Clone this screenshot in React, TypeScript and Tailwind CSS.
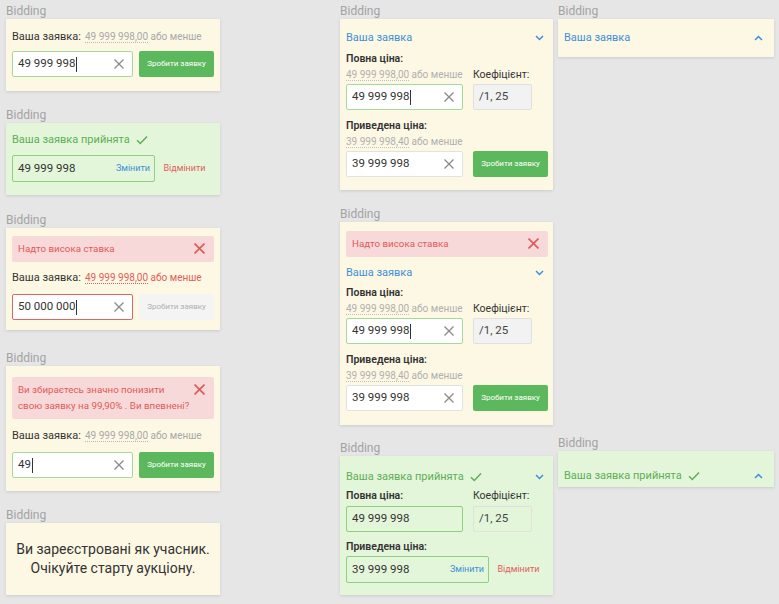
import React from 'react';

const cream = 'bg-[#fdf8e4]';
const green = 'bg-[#e3f6da]';

function Label() {
  return (
    <div className="h-[19px] pt-[3px] text-[12px] leading-[16px] text-[#a3a3a3]">Bidding</div>
  );
}

function Panel({ className, children }: { className: string; children?: React.ReactNode }) {
  return <div className={`shadow-[0_1px_3px_rgba(0,0,0,0.12)] ${className}`}>{children}</div>;
}

function XIcon({ size = 10, color = '#8a8a8a', stroke = 1.3 }: { size?: number; color?: string; stroke?: number }) {
  return (
    <svg width={size} height={size} viewBox="0 0 10 10" fill="none">
      <path d="M0.5 0.5 L9.5 9.5 M9.5 0.5 L0.5 9.5" stroke={color} strokeWidth={stroke} />
    </svg>
  );
}

function Check() {
  return (
    <svg width="12" height="10" viewBox="0 0 12 10" fill="none">
      <path d="M1 5.2 L4.3 8.5 L11 1.5" stroke="#5fae57" strokeWidth="1.5" />
    </svg>
  );
}

function Chevron({ up = false }: { up?: boolean }) {
  return (
    <svg width="9" height="6" viewBox="0 0 9 6" fill="none">
      <path d={up ? 'M1 5 L4.5 1.5 L8 5' : 'M1 1 L4.5 4.5 L8 1'} stroke="#3d8fd9" strokeWidth="1.5" />
    </svg>
  );
}

function Field({
  value,
  width,
  border,
  caret = false,
}: {
  value: string;
  width: string;
  border: string;
  caret?: boolean;
}) {
  return (
    <div className={`${width} h-[26px] rounded-[2px] border ${border} bg-white flex items-center pl-[5px] pr-[8px]`}>
      <span className="text-[11.5px] text-[#333]">{value}</span>
      {caret && <span className="ml-[1px] w-[1px] h-[15px] bg-[#333]" />}
      <span className="flex-1" />
      <XIcon />
    </div>
  );
}

function Submit({ disabled = false }: { disabled?: boolean }) {
  return (
    <div
      className={`w-[75px] h-[26px] rounded-[2px] flex items-center justify-center text-[8px] ${
        disabled ? 'bg-[#f4f4f4] text-[#b0b0b0]' : 'bg-[#5cb85c] text-white'
      }`}
    >
      Зробити заявку
    </div>
  );
}

function BidLine({ red = false }: { red?: boolean }) {
  return (
    <div className="flex items-baseline gap-[4px] h-[16px] leading-[16px] whitespace-nowrap">
      <span className="text-[11px] text-[#333]">Ваша заявка:</span>
      <span className={`text-[10px] ${red ? 'text-[#e35d5d]' : 'text-[#a8a8a8]'}`}>
        <span className={`border-b border-dotted ${red ? 'border-[#e35d5d]' : 'border-[#b8b8b8]'}`}>49 999 998,00</span>{' '}
        або менше
      </span>
    </div>
  );
}

function Alert({ children }: { children: React.ReactNode }) {
  return (
    <div className="bg-[#f8d9d9] rounded-[2px] flex items-start pl-[6px] pr-[9px] py-[5px] text-[9.75px] leading-[16px] text-[#e05a5a]">
      <div className="flex-1 whitespace-nowrap">{children}</div>
      <div className="pt-[2px]">
        <XIcon size={11} color="#e05a5a" stroke={1.5} />
      </div>
    </div>
  );
}

function Hint({ value }: { value: string }) {
  return (
    <div className="h-[15px] leading-[15px] text-[10px] text-[#b0b0b0] whitespace-nowrap">
      <span className="border-b border-dotted border-[#c0c0c0]">{value}</span> або менше
    </div>
  );
}

function SmallTitle({ children }: { children: React.ReactNode }) {
  return <div className="h-[16px] leading-[16px] text-[10.5px] font-semibold text-[#333]">{children}</div>;
}

function Coef({ bg = 'bg-[#f2f2f2]' }: { bg?: string }) {
  return (
    <div className={`w-[59px] h-[26px] rounded-[2px] border border-[#e0e0e0] ${bg} flex items-center pl-[5px] text-[11.5px] text-[#444]`}>
      /1, 25
    </div>
  );
}

function FullForm({ top }: { top: string }) {
  return (
    <>
      <div className={`${top} grid grid-cols-[117px_1fr] gap-x-[10px]`}>
        <div>
          <SmallTitle>Повна ціна:</SmallTitle>
          <Hint value="49 999 998,00" />
          <div className="mt-[2px]">
            <Field value="49 999 998" width="w-[117px]" border="border-[#a6da9a]" caret />
          </div>
        </div>
        <div className="pt-[16px]">
          <div className="h-[15px] leading-[15px] text-[10.5px] text-[#333]">Коефіцієнт:</div>
          <div className="mt-[2px]">
            <Coef />
          </div>
        </div>
      </div>
      <div className="mt-[8px] grid grid-cols-[117px_1fr] gap-x-[10px]">
        <div>
          <SmallTitle>Приведена ціна:</SmallTitle>
          <Hint value="39 999 998,40" />
          <div className="mt-[2px]">
            <Field value="39 999 998" width="w-[117px]" border="border-[#e2e2e2]" />
          </div>
        </div>
        <div className="pt-[33px]">
          <Submit />
        </div>
      </div>
    </>
  );
}

function Header({ up = false }: { up?: boolean }) {
  return (
    <div className="flex items-center justify-between h-[18px] pr-[4px]">
      <span className="text-[11px] text-[#3d8fd9]">Ваша заявка</span>
      <Chevron up={up} />
    </div>
  );
}

function AcceptedTitle() {
  return (
    <span className="flex items-center gap-[6px] text-[11px] text-[#5fae57]">
      Ваша заявка прийнята <Check />
    </span>
  );
}

function Accepted({ value }: { value: string }) {
  return (
    <div className="flex items-center">
      <div className="w-[143px] h-[27px] rounded-[2px] border border-[#8fcf80] flex items-center pl-[5px] pr-[4px]">
        <span className="flex-1 text-[11.5px] text-[#333]">{value}</span>
        <span className="text-[9px] text-[#3d8fd9]">Змінити</span>
      </div>
      <div className="flex-1 text-center text-[9px] text-[#e35d5d]">Відмінити</div>
    </div>
  );
}

export default function App() {
  return (
    <div className="w-[779px] h-[604px] bg-[#e6e6e6] flex overflow-hidden font-['Roboto',sans-serif]">
      {/* left column */}
      <div className="ml-[6px] w-[214px] flex flex-col">
        <Label />
        <Panel className={`${cream} px-[6px] pt-[10px] pb-[14px]`}>
          <BidLine />
          <div className="mt-[6px] flex gap-[6px]">
            <Field value="49 999 998" width="w-[121px]" border="border-[#a6da9a]" caret />
            <Submit />
          </div>
        </Panel>

        <div className="mt-[13px]">
          <Label />
          <Panel className={`${green} px-[6px] pt-[8px] pb-[13px]`}>
            <div className="h-[18px] flex items-center">
              <AcceptedTitle />
            </div>
            <div className="mt-[6px]">
              <Accepted value="49 999 998" />
            </div>
          </Panel>
        </div>

        <div className="mt-[14px]">
          <Label />
          <Panel className={`${cream} px-[6px] pt-[8px] pb-[10px]`}>
            <Alert>Надто висока ставка</Alert>
            <div className="mt-[8px]">
              <BidLine red />
            </div>
            <div className="mt-[8px] flex gap-[6px]">
              <Field value="50 000 000" width="w-[121px]" border="border-[#e06666]" caret />
              <Submit disabled />
            </div>
          </Panel>
        </div>

        <div className="mt-[17px]">
          <Label />
          <Panel className={`${cream} px-[6px] pt-[11px] pb-[13px]`}>
            <Alert>
              Ви збираєтесь значно понизити
              <br />
              свою заявку на 99,90% . Ви впевнені?
            </Alert>
            <div className="mt-[9px]">
              <BidLine />
            </div>
            <div className="mt-[8px] flex gap-[6px]">
              <Field value="49" width="w-[121px]" border="border-[#a6da9a]" caret />
              <Submit />
            </div>
          </Panel>
        </div>

        <div className="mt-[13px]">
          <Label />
          <Panel className={`${cream} h-[72px] flex flex-col items-center justify-center text-[14px] leading-[19px] text-[#333]`}>
            <div>Ви зареєстровані як учасник.</div>
            <div>Очікуйте старту аукціону.</div>
          </Panel>
        </div>
      </div>

      {/* middle column */}
      <div className="ml-[120px] w-[213px] flex flex-col">
        <Label />
        <Panel className={`${cream} pl-[6px] pr-[5px] pt-[10px] pb-[13px]`}>
          <Header />
          <FullForm top="mt-[4px]" />
        </Panel>

        <div className="mt-[13px]">
          <Label />
          <Panel className={`${cream} pl-[6px] pr-[5px] pt-[9px] pb-[14px]`}>
            <Alert>Надто висока ставка</Alert>
            <div className="mt-[7px]">
              <Header />
            </div>
            <FullForm top="mt-[3px]" />
          </Panel>
        </div>

        <div className="mt-[12px]">
          <Label />
          <Panel className={`${green} pl-[6px] pr-[5px] pt-[12px] pb-[12px]`}>
            <div className="flex items-center justify-between h-[18px] pr-[4px]">
              <AcceptedTitle />
              <Chevron />
            </div>
            <div className="mt-[2px] grid grid-cols-[117px_1fr] gap-x-[10px]">
              <div>
                <SmallTitle>Повна ціна:</SmallTitle>
                <div className="mt-[2px] w-[117px] h-[26px] rounded-[2px] border border-[#8fcf80] flex items-center pl-[5px] text-[11.5px] text-[#333]">
                  49 999 998
                </div>
              </div>
              <div>
                <div className="h-[16px] leading-[16px] text-[10.5px] text-[#333]">Коефіцієнт:</div>
                <div className="mt-[2px]">
                  <Coef bg="bg-[#e3f6da]" />
                </div>
              </div>
            </div>
            <div className="mt-[7px]">
              <SmallTitle>Приведена ціна:</SmallTitle>
              <div className="mt-[1px]">
                <Accepted value="39 999 998" />
              </div>
            </div>
          </Panel>
        </div>
      </div>

      {/* right column */}
      <div className="ml-[5px] w-[216px] flex flex-col">
        <Label />
        <Panel className={`${cream} h-[38px] pl-[6px] pr-[7px] flex flex-col justify-center`}>
          <Header up />
        </Panel>

        <div className="mt-[375px]">
          <Label />
          <Panel className={`${green} h-[36px] pl-[6px] pr-[7px] pt-[16px]`}>
            <div className="flex items-center justify-between h-[18px] pr-[4px]">
              <AcceptedTitle />
              <Chevron up />
            </div>
          </Panel>
        </div>
      </div>
    </div>
  );
}
